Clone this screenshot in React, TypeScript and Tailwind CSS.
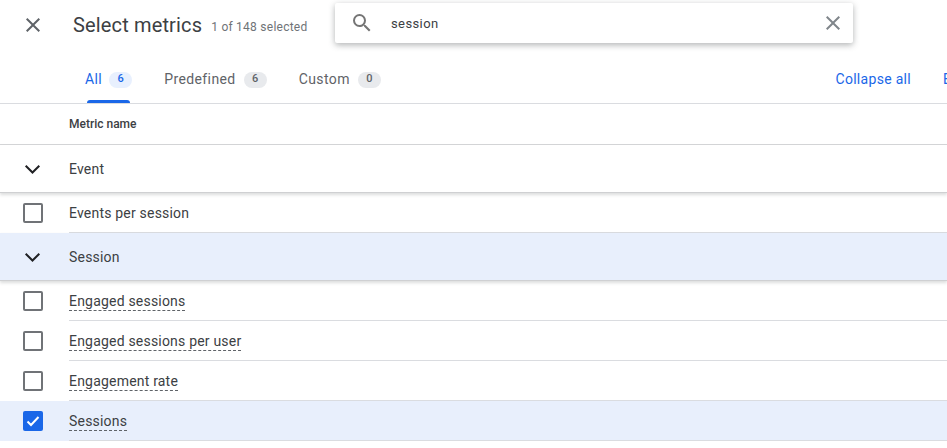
import React from "react";

const font = { fontFamily: "Roboto, sans-serif" };

function CloseIcon({ className }: { className: string }) {
  return (
    <svg viewBox="0 0 24 24" className={className} fill="currentColor">
      <path d="M19 6.41 17.59 5 12 10.59 6.41 5 5 6.41 10.59 12 5 17.59 6.41 19 12 13.41 17.59 19 19 17.59 13.41 12z" />
    </svg>
  );
}

function Chevron() {
  return (
    <svg viewBox="0 0 24 24" className="w-[24px] h-[24px] text-[#202124]" fill="none" stroke="currentColor" strokeWidth="2">
      <path d="M4.7 8.7 11.5 15.5l6.8-6.8" />
    </svg>
  );
}

function Tab({ label, n, active, gap }: { label: string; n: string; active?: boolean; gap: string }) {
  return (
    <div className={`relative h-[47px] flex items-center ${gap}`}>
      <span className={`text-[14px] tracking-[0.4px] ${active ? "text-[#1a67e8]" : "text-[#5f6368]"}`}>{label}</span>
      <span
        className={`${active ? "ml-[7px]" : "ml-[8px]"} w-[23px] h-[16px] rounded-full flex items-center justify-center text-[11px] font-medium ${
          active ? "bg-[#e8f0fe] text-[#1a67e8]" : "bg-[#e8eaed] text-[#5f6368]"
        }`}
      >
        {n}
      </span>
      {active && <div className="absolute left-[2px] bottom-0 w-[43px] h-[3px] rounded-t-[3px] bg-[#1a67e8]" />}
    </div>
  );
}

function GroupRow({ label, active, h }: { label: string; active?: boolean; h: string }) {
  return (
    <div
      className={`${h} relative z-10 flex items-center border-b border-[#cfd0d2] shadow-[0_2px_3px_rgba(60,64,67,0.18)] ${
        active ? "bg-[#e8effc]" : "bg-white"
      }`}
    >
      <div className="w-[69px] pl-[21px] flex items-center shrink-0">
        <Chevron />
      </div>
      <span className="pt-[2px] text-[14px] tracking-[0.2px] text-[#3c4043]">{label}</span>
    </div>
  );
}

function Checkbox({ checked }: { checked?: boolean }) {
  if (checked) {
    return (
      <div className="w-[20px] h-[20px] rounded-[2px] bg-[#1a67e8] flex items-center justify-center">
        <svg viewBox="0 0 20 20" className="w-[20px] h-[20px]" fill="none" stroke="white" strokeWidth="2">
          <path d="M4.5 10.5 8 14l7.5-8" />
        </svg>
      </div>
    );
  }
  return <div className="w-[20px] h-[20px] rounded-[2px] border-2 border-[#707377] bg-white" />;
}

function MetricRow({ label, dashed = true, checked, h = "h-[40px]" }: { label: string; dashed?: boolean; checked?: boolean; h?: string }) {
  return (
    <div className={`${h} flex items-stretch ${checked ? "bg-[#e8effc]" : "bg-white"}`}>
      <div className="w-[69px] pl-[23px] flex items-center shrink-0">
        <Checkbox checked={checked} />
      </div>
      <div className="flex-1 flex items-center border-b border-[#dadce0] pt-[2px]">
        <span
          className={`text-[14px] tracking-[0.2px] text-[#3c4043] ${
            dashed ? "border-b border-dashed border-[#5f6368] leading-[18px]" : ""
          }`}
        >
          {label}
        </span>
      </div>
    </div>
  );
}

export default function App() {
  return (
    <div className="w-[947px] h-[448px] overflow-hidden bg-white" style={font}>
      <div className="h-[56px] flex items-start">
        <div className="w-[73px] h-[50px] pl-[21px] flex items-center shrink-0">
          <CloseIcon className="w-[24px] h-[24px] text-[#5f6368]" />
        </div>
        <div className="h-[50px] flex items-center w-[262px] shrink-0">
          <span className="text-[20px] tracking-[0.15px] text-[#3c4043] leading-none">Select metrics</span>
          <span className="ml-[9px] mt-[4px] text-[12px] tracking-[0.25px] text-[#6f7377]">1 of 148 selected</span>
        </div>
        <div className="mt-[3px] w-[518px] h-[40px] bg-white rounded-[2px] shadow-[0_2px_6px_rgba(60,64,67,0.4)] flex items-center shrink-0">
          <svg viewBox="0 0 24 24" className="ml-[15px] w-[24px] h-[24px] text-[#757575]" fill="currentColor">
            <path d="M15.5 14h-.79l-.28-.27A6.47 6.47 0 0 0 16 9.5 6.5 6.5 0 1 0 9.5 16c1.61 0 3.09-.59 4.23-1.57l.27.28v.79l5 4.99L20.49 19zm-6 0C7.01 14 5 11.99 5 9.5S7.01 5 9.5 5 14 7.01 14 9.5 11.99 14 9.5 14z" />
          </svg>
          <span className="ml-[17px] pt-[1px] text-[13px] tracking-[0.4px] text-[#3c4043] flex-1">session</span>
          <CloseIcon className="mr-[8px] w-[24px] h-[24px] text-[#80868b]" />
        </div>
      </div>
      <div className="h-[48px] flex items-start border-b border-[#dadce0] pl-[85px]">
        <Tab label="All" n="6" active gap="mr-[32px]" />
        <Tab label="Predefined" n="6" gap="mr-[32px]" />
        <Tab label="Custom" n="0" gap="" />
        <div className="ml-auto h-[47px] flex items-center whitespace-nowrap text-[14px] tracking-[0.3px] text-[#1a67e8]">
          <span>Collapse all</span>
          <span className="ml-[32px] w-[4px] overflow-hidden">E</span>
        </div>
      </div>
      <div className="h-[41px] flex items-center pl-[69px] border-b border-[#d5d6d8]">
        <span className="text-[12px] font-medium text-[#3c4043]">Metric name</span>
      </div>
      <GroupRow label="Event" h="h-[48px]" />
      <MetricRow label="Events per session" dashed={false} />
      <GroupRow label="Session" active h="h-[48px]" />
      <MetricRow label="Engaged sessions" />
      <MetricRow label="Engaged sessions per user" />
      <MetricRow label="Engagement rate" />
      <MetricRow label="Sessions" checked />
    </div>
  );
}
